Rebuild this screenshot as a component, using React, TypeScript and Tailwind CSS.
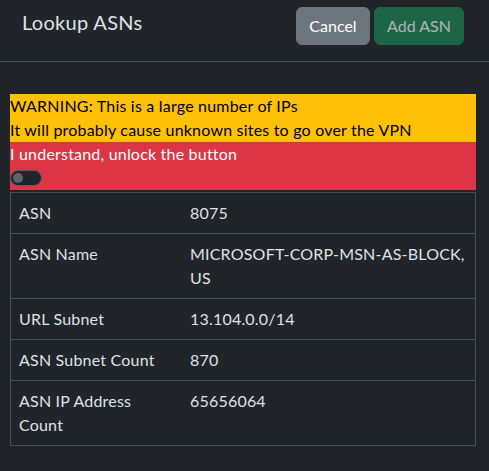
import React from "react";

const rows: { k: string; v: string }[] = [
  { k: "ASN", v: "8075" },
  { k: "ASN Name", v: "MICROSOFT-CORP-MSN-AS-BLOCK, US" },
  { k: "URL Subnet", v: "13.104.0.0/14" },
  { k: "ASN Subnet Count", v: "870" },
  { k: "ASN IP Address Count", v: "65656064" },
];

export default function App() {
  return (
    <div
      className="w-[489px] h-[471px] bg-[#212529] text-[#dee2e6] overflow-hidden tracking-[0.2px]"
      style={{ fontFamily: "Lato, 'Noto Sans', sans-serif" }}
    >
      <div className="flex items-start justify-between pl-[22px] pr-[25px] pt-[7px] pb-[16px] border-b border-[#495057]">
        <h5 className="text-[20px] leading-[30px] mt-[0px] font-normal tracking-[0.3px]">Lookup ASNs</h5>
        <div className="flex gap-[4px] tracking-normal">
          <button className="h-[38px] w-[74px] rounded-[6px] bg-[#6c757d] border border-[#6c757d] text-white text-[16px] leading-[24px]">
            Cancel
          </button>
          <button
            disabled
            className="h-[38px] w-[90px] rounded-[6px] bg-[#198754] border border-[#198754] text-white text-[16px] leading-[24px] opacity-65"
          >
            Add ASN
          </button>
        </div>
      </div>
      <div className="pt-[32px] pl-[10px] w-[476px]">
        <div className="bg-[#ffc107] text-[#000] text-[16px] leading-[24px]">
          <div>WARNING: This is a large number of IPs</div>
          <div>It will probably cause unknown sites to go over the VPN</div>
        </div>
        <div className="bg-[#dc3545] text-white text-[16px] leading-[24px] pb-[4px]">
          <div>I understand, unlock the button</div>
          <div className="mt-[4px] w-[32px] h-[16px] rounded-full border border-[#5a5f65] bg-[#212529] flex items-center pl-[2px]">
            <div className="w-[10px] h-[10px] rounded-full bg-[#5f6468]" />
          </div>
        </div>
        <div className="mt-[2px] border border-[#495057] text-[16px] leading-[24px]">
          {rows.map((r, i) => (
            <div
              key={r.k}
              className={`grid grid-cols-[171px_1fr] ${i > 0 ? "border-t border-[#495057]" : ""}`}
            >
              <div className="p-[8px]">{r.k}</div>
              <div className="p-[8px]">{r.v}</div>
            </div>
          ))}
        </div>
      </div>
    </div>
  );
}
